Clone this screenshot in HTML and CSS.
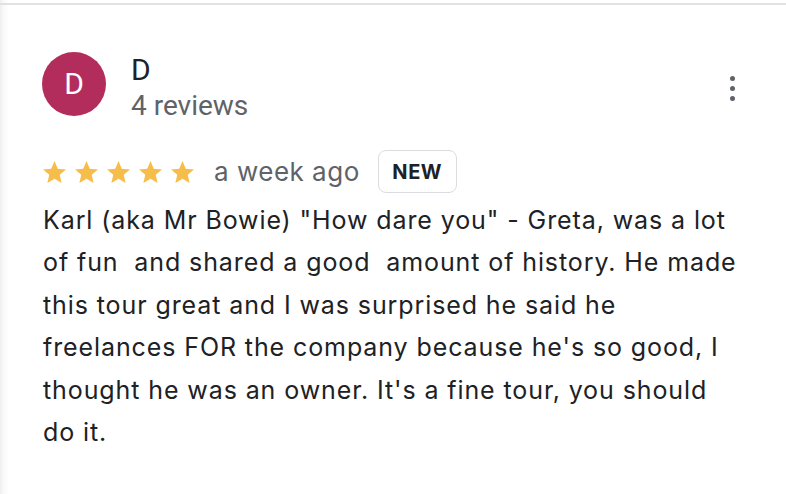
FILE: index.html
```html
<!DOCTYPE html>
<html>
<head>
<meta charset="utf-8">
<link rel="stylesheet" href="styles.css">
</head>
<body>
<div class="page">
  <div class="topline"></div>
  <div class="review">
    <div class="header">
      <div class="avatar">D</div>
      <div class="info">
        <div class="name">D</div>
        <div class="count">4 reviews</div>
      </div>
      <div class="menu" aria-label="More">
        <span class="dot"></span><span class="dot"></span><span class="dot"></span>
      </div>
    </div>
    <div class="meta">
      <div class="stars">
        <svg class="star" viewBox="2 2 20 19"><path d="M12 17.27L18.18 21l-1.64-7.03L22 9.24l-7.19-.61L12 2 9.19 8.63 2 9.24l5.46 4.73L5.82 21z"/></svg>
        <svg class="star" viewBox="2 2 20 19"><path d="M12 17.27L18.18 21l-1.64-7.03L22 9.24l-7.19-.61L12 2 9.19 8.63 2 9.24l5.46 4.73L5.82 21z"/></svg>
        <svg class="star" viewBox="2 2 20 19"><path d="M12 17.27L18.18 21l-1.64-7.03L22 9.24l-7.19-.61L12 2 9.19 8.63 2 9.24l5.46 4.73L5.82 21z"/></svg>
        <svg class="star" viewBox="2 2 20 19"><path d="M12 17.27L18.18 21l-1.64-7.03L22 9.24l-7.19-.61L12 2 9.19 8.63 2 9.24l5.46 4.73L5.82 21z"/></svg>
        <svg class="star" viewBox="2 2 20 19"><path d="M12 17.27L18.18 21l-1.64-7.03L22 9.24l-7.19-.61L12 2 9.19 8.63 2 9.24l5.46 4.73L5.82 21z"/></svg>
      </div>
      <span class="time">a week ago</span>
      <span class="badge">NEW</span>
    </div>
    <p class="text">Karl (aka Mr Bowie) "How dare you" - Greta, was a lot<br>of fun&nbsp; and shared a good&nbsp; amount of history. He made<br>this tour great and I was surprised he said he<br>freelances FOR the company because he's so good, I<br>thought he was an owner. It's a fine tour, you should<br>do it.</p>
  </div>
</div>
</body>
</html>
```

FILE: styles.css
```css
html, body {
  margin: 0;
  padding: 0;
  background: #fff;
}
.page {
  width: 786px;
  height: 494px;
  background: linear-gradient(to right, #efefef 0, #fafafa 4px, #ffffff 9px);
  font-family: Roboto, "Noto Sans", "Liberation Sans", sans-serif;
  color: #202124;
  padding-top: 3px;
  box-sizing: border-box;
}
.topline {
  height: 2px;
  background: #e2e2e2;
}
.review {
  padding: 47px 0 0 42px;
}
.header {
  display: flex;
  align-items: flex-start;
}
.avatar {
  width: 64px;
  height: 64px;
  border-radius: 50%;
  background: #b22d5b;
  color: #fff;
  font-size: 30px;
  line-height: 64px;
  text-align: center;
  flex: none;
}
.info {
  margin-left: 25px;
  margin-top: 1px;
}
.name {
  font-size: 30px;
  line-height: 34px;
  color: #202124;
}
.count {
  font-size: 28px;
  line-height: 37px;
  color: #5f6368;
}
.menu {
  margin-left: auto;
  margin-right: 51px;
  margin-top: 24px;
  display: flex;
  flex-direction: column;
  gap: 5px;
}
.dot {
  width: 5px;
  height: 5px;
  border-radius: 50%;
  background: #5f6368;
}
.meta {
  display: flex;
  align-items: center;
  margin-top: 26px;
  height: 43px;
}
.stars {
  display: flex;
  gap: 9px;
  margin-left: 1px;
}
.star {
  width: 23px;
  height: 22px;
  fill: #f6bd4b;
  display: block;
}
.time {
  font-family: Inter, Roboto, sans-serif;
  font-size: 26px;
  letter-spacing: 0.5px;
  color: #5f6368;
  margin-left: 20px;
}
.badge {
  margin-left: 18px;
  height: 41px;
  width: 77px;
  border: 1px solid #dadce0;
  border-radius: 8px;
  box-sizing: content-box;
  display: flex;
  align-items: center;
  justify-content: center;
  font-family: Inter, Roboto, sans-serif;
  font-size: 20px;
  font-weight: 700;
  letter-spacing: 0.6px;
  color: #202124;
}
.text {
  margin: 6px 0 0 1px;
  font-family: Inter, Roboto, sans-serif;
  font-size: 25px;
  letter-spacing: 0.9px;
  line-height: 42.4px;
  color: #202124;
}
```
